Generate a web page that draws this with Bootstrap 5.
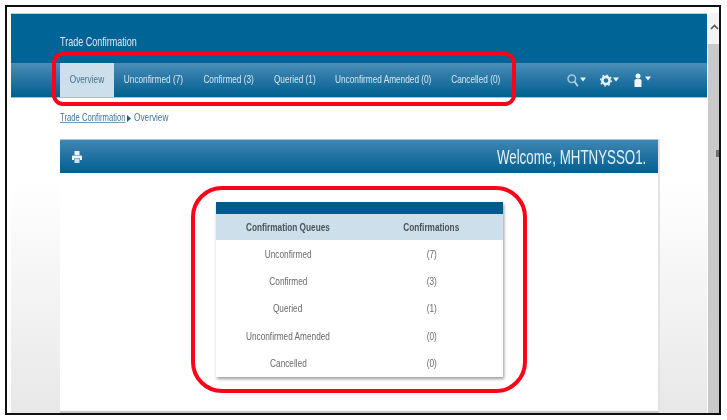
<!DOCTYPE html>
<html lang="en">
<head>
<meta charset="utf-8">
<title>Trade Confirmation</title>
<link rel="stylesheet" href="https://cdn.jsdelivr.net/npm/bootstrap@5.3.0/dist/css/bootstrap.min.css">
<style>
html,body{height:100%;background:#fff;overflow:hidden}
body{font-family:"Liberation Sans",sans-serif;font-size:11px;color:#555;line-height:1.2}
.shot-frame{position:relative;margin:5px 0 0 5px;width:716px;height:410px;border:2px solid #111;padding:6px 0 0 4px;background:#fff;overflow:hidden}
.shot-app{height:100%;filter:blur(.35px)}
.shot-sq{display:inline-block;white-space:nowrap;transform:scaleX(.75)}
.shot-sq-l{transform-origin:left center}
.shot-sq-c{transform:scaleX(.7)}
.shot-sq-r{transform:scaleX(.635);transform-origin:right center}
.shot-main{width:696px;background:linear-gradient(#fff 0,#fff 42%,#e8e8e8 100%);flex:none}
.shot-scroll{width:13px;margin-left:1px;flex:none;background:#c9c9c9}
.shot-scroll-top{height:31px;background:#f4f4f4;padding-top:11px}
.shot-scroll-thumb{width:5px;height:7px;background:#6f6f6f;margin:106px 0 0 8px}
.shot-brand{height:50px;background:#006496;color:#dbe9f1;padding:21px 0 0 49px;font-size:12px;border-top:1px solid #b5cbd8}
.shot-nav{height:34px;background:linear-gradient(#4a8fba 0,#2f7ba9 35%,#00608f 100%);padding-left:49px;box-shadow:0 1px 0 #9fc0d3}
.shot-tab{color:#d5e5ef;white-space:nowrap;justify-content:center}
.shot-tab.is-on{background:#cddfeb;color:#40708f}
.shot-w54{width:54px}.shot-w79{width:79px}.shot-w71{width:71px}.shot-w61{width:61px}.shot-w116{width:116px}.shot-w69{width:69px}
.shot-tools{margin-right:55px;gap:14px}
.shot-crumb{padding:14px 0 0 49px;height:42px;color:#3f7596}
.shot-crumb-a{width:65px}
.shot-crumb-a u{text-decoration-color:#6f9ab3}
.shot-crumb-arrow{margin:0 3px 0 2px}
.shot-panel{margin-left:49px;width:600px;height:275px;background:#fff;border-right:2px solid #e3e3e3;border-bottom:3px solid #c9c9c9}
.shot-panel-head{height:34px;background:linear-gradient(#3f88b4 0,#2a78a7 35%,#00608f 100%);color:#e8f1f6;padding:0 12px;border-top:1px solid #a9c6d6}
.shot-welcome{font-size:21px}
.shot-table-wrap{width:287px;margin:29px 0 0 156px;box-shadow:1px 2px 3px rgba(0,0,0,.4);background:#fff}
.shot-table-bar{height:12px;background:#005a8c}
.shot-table-wrap .table{--bs-table-bg:transparent;--bs-table-color:#6a6a6a;margin:0;font-size:11px;table-layout:fixed}
.shot-table-wrap th{background:#cddfeb;color:#4c5358;height:26px;padding:1px 0 0;border:0;vertical-align:middle;text-align:center;font-size:11px}
.shot-table-wrap td{height:27.4px;padding:1px 0 0;border:0;vertical-align:middle;text-align:center}
.shot-col1{width:144px}
.shot-ring{position:absolute;border:4px solid #fb0318;pointer-events:none}
.shot-ring-a{left:45px;top:45px;width:464px;height:54px;border-radius:11px}
.shot-ring-b{left:184px;top:179px;width:336px;height:207px;border-radius:31px}
</style>
</head>
<body>
<div class="shot-frame">
  <div class="shot-app d-flex">
    <div class="shot-main">
      <div class="shot-brand"><span class="shot-sq shot-sq-l">Trade Confirmation</span></div>
      <nav class="shot-nav d-flex align-items-stretch justify-content-between">
        <div class="d-flex align-items-stretch">
          <a class="shot-tab is-on shot-w54 d-flex align-items-center text-decoration-none"><span class="shot-sq">Overview</span></a>
          <a class="shot-tab shot-w79 d-flex align-items-center text-decoration-none"><span class="shot-sq">Unconfirmed (7)</span></a>
          <a class="shot-tab shot-w71 d-flex align-items-center text-decoration-none"><span class="shot-sq">Confirmed (3)</span></a>
          <a class="shot-tab shot-w61 d-flex align-items-center text-decoration-none"><span class="shot-sq">Queried (1)</span></a>
          <a class="shot-tab shot-w116 d-flex align-items-center text-decoration-none"><span class="shot-sq">Unconfirmed Amended (0)</span></a>
          <a class="shot-tab shot-w69 d-flex align-items-center text-decoration-none"><span class="shot-sq">Cancelled (0)</span></a>
        </div>
        <div class="shot-tools d-flex align-items-center">
          <svg width="19" height="13" viewBox="0 0 19 13"><circle cx="4.800" cy="4.800" r="3.800" fill="none" stroke="#a9c8da" stroke-width="1.500"/><path d="M7.500 7.500l3.300 4.800" stroke="#b5d0e0" stroke-width="1.800"/><path d="M13 3.500h6l-3 4z" fill="#eef5f9"/></svg>
          <svg width="20" height="13" viewBox="0 0 20 13"><circle cx="6" cy="6.500" r="3.600" fill="none" stroke="#e4eef4" stroke-width="2.600"/><circle cx="6" cy="6.500" r="5.400" fill="none" stroke="#e4eef4" stroke-width="1.400" stroke-dasharray="1.700 2.500"/><path d="M13 3.500h6l-3 4z" fill="#eef5f9"/></svg>
          <svg width="18" height="14" viewBox="0 0 18 14"><circle cx="4" cy="3" r="2.500" fill="#f2f7fa"/><path d="M.5 14V7.500Q.5 6 2.500 6H5.500Q7.500 6 7.500 7.500V14z" fill="#f2f7fa"/><path d="M11 3.500h6l-3 4z" fill="#eef5f9"/></svg>
        </div>
      </nav>
      <div class="shot-crumb d-flex align-items-start">
        <span class="shot-crumb-a"><u class="shot-sq shot-sq-l shot-sq-c">Trade Confirmation</u></span>
        <svg class="shot-crumb-arrow mt-1" width="4" height="7" viewBox="0 0 4 7"><path d="M0 0l4 3.500-4 3.500z" fill="#1f5f86"/></svg>
        <span class="shot-sq shot-sq-l">Overview</span>
      </div>
      <section class="shot-panel">
        <div class="shot-panel-head d-flex align-items-center justify-content-between">
          <svg width="10" height="12" viewBox="0 0 10 12"><path d="M2.500 0h5v4h-5z" fill="#eef4f8"/><path d="M1 4.500h8q1 0 1 1v3.500H8V7.500H2V9H0V5.500q0-1 1-1z" fill="#eef4f8"/><path d="M2.500 8h5v4h-5z" fill="#cfdfe9"/></svg>
          <span class="shot-welcome shot-sq shot-sq-r">Welcome, MHTNYSSO1.</span>
        </div>
        <div class="shot-table-wrap">
          <div class="shot-table-bar"></div>
          <table class="table">
            <thead><tr><th class="shot-col1"><span class="shot-sq">Confirmation Queues</span></th><th><span class="shot-sq">Confirmations</span></th></tr></thead>
            <tbody>
              <tr><td><span class="shot-sq">Unconfirmed</span></td><td><span class="shot-sq">(7)</span></td></tr>
              <tr><td><span class="shot-sq">Confirmed</span></td><td><span class="shot-sq">(3)</span></td></tr>
              <tr><td><span class="shot-sq">Queried</span></td><td><span class="shot-sq">(1)</span></td></tr>
              <tr><td><span class="shot-sq">Unconfirmed Amended</span></td><td><span class="shot-sq">(0)</span></td></tr>
              <tr><td><span class="shot-sq">Cancelled</span></td><td><span class="shot-sq">(0)</span></td></tr>
            </tbody>
          </table>
        </div>
      </section>
    </div>
    <div class="shot-scroll">
      <div class="shot-scroll-top d-flex justify-content-center align-items-start"><svg width="9" height="6" viewBox="0 0 9 6"><path d="M1 5l3.500-3.500L8 5" fill="none" stroke="#555" stroke-width="1.600"/></svg></div>
      <div class="shot-scroll-thumb"></div>
    </div>
  </div>
  <div class="shot-ring shot-ring-a"></div>
  <div class="shot-ring shot-ring-b"></div>
</div>
<script src="https://cdn.jsdelivr.net/npm/bootstrap@5.3.0/dist/js/bootstrap.bundle.min.js"></script>
</body>
</html>
